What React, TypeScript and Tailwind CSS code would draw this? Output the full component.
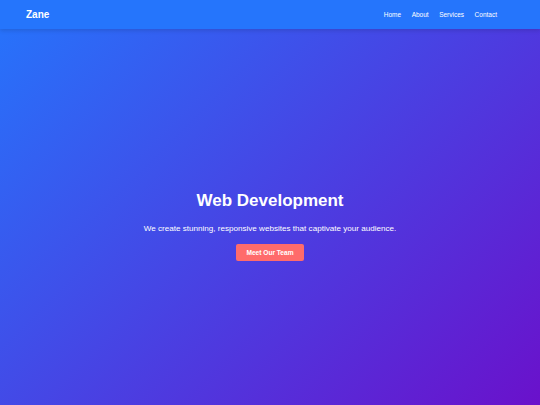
export default function App() {
  return (
    <div
      className="relative w-[540px] h-[405px] overflow-hidden bg-[linear-gradient(135deg,#2575fc,#6a11cb)] text-white"
      style={{ fontFamily: '"Liberation Sans", Arial, sans-serif' }}
    >
      <header className="h-[29px] bg-[#2575fc] shadow-[0_2px_4px_rgba(0,0,0,0.12)] flex items-center justify-between pl-[26px] pr-[43px]">
        <div className="text-[10px] font-bold">Zane</div>
        <nav className="flex gap-[10.5px] text-[6.5px]">
          <span>Home</span>
          <span>About</span>
          <span>Services</span>
          <span>Contact</span>
        </nav>
      </header>
      <main className="flex flex-col items-center pt-[162px]">
        <h1 className="text-[17px] font-bold leading-[20px]">Web Development</h1>
        <p className="mt-[12px] text-[8.1px] leading-[11px]">
          We create stunning, responsive websites that captivate your audience.
        </p>
        <button className="mt-[10px] h-[17px] px-[10px] rounded-[2px] bg-[#ff6b6b] text-[6.6px] font-bold text-white">
          Meet Our Team
        </button>
      </main>
    </div>
  );
}
